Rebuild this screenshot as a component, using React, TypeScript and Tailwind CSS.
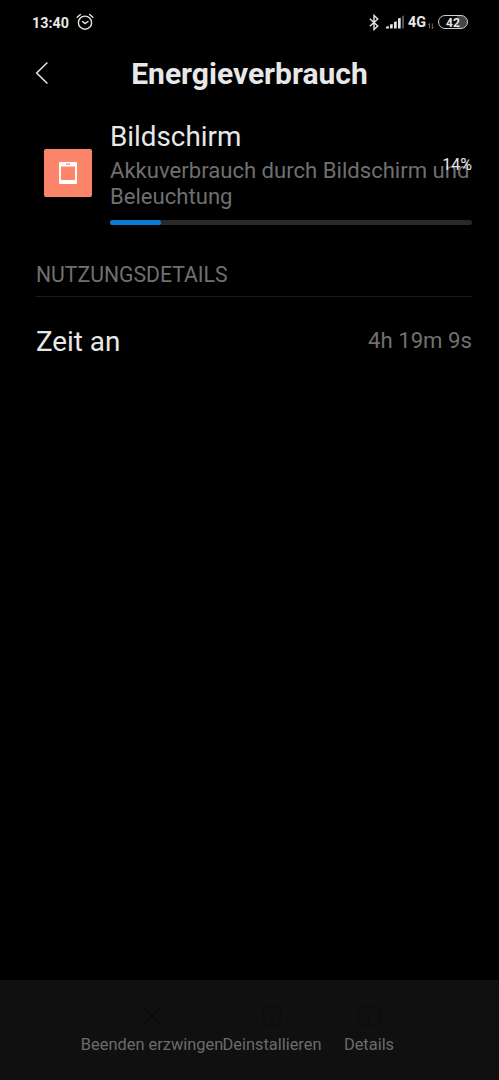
function StatusBar() {
  return (
    <div className="flex h-[44px] items-center justify-between pl-8 pr-[31px]">
      <div className="flex items-center gap-[7px]">
        <span className="pt-[2px] text-[14.3px] font-bold leading-none">13:40</span>
        <svg width="18" height="18" viewBox="0 0 18 18" fill="none" stroke="#e4e4e4" strokeWidth="1.4" strokeLinecap="round">
          <circle cx="9" cy="9.7" r="6.6" />
          <path d="M1.2 4.2 4.4 1.5M16.8 4.2l-3.2-2.7M6.5 8.5 9 10.6l3-2.1" />
        </svg>
      </div>
      <div className="flex items-center">
        <svg width="10" height="17" viewBox="0 0 10 17" fill="none" stroke="#e4e4e4" strokeWidth="1.4">
          <path d="M.8 4.7 8.8 12 5 15.6V1.4L8.8 5 .8 12.3" />
        </svg>
        <svg className="ml-[7px]" width="19" height="14" viewBox="0 0 19 14" fill="#e4e4e4">
          <path d="M0 11.8 2.9 10.9V13.5H0zM4 9.6l2.7-.7v4.6H4zM8 7l2.7-.7v7.2H8zM12 3.5l2.7-.7v10.7H12z" />
          <path d="M16 1l2-.6v13.1h-2z" fill="#555" />
        </svg>
        <span className="ml-[3px] pt-px text-[14.3px] font-bold leading-none">4G</span>
        <svg className="ml-[2px] mt-[8px]" width="6" height="6" viewBox="0 0 6 6" fill="none" stroke="#777" strokeWidth=".9">
          <path d="M1.5 5.5V.5L.3 2M4.3.5v5L5.6 4" />
        </svg>
        <div className="ml-1 flex h-[14px] w-[30px] items-center justify-center rounded-full border-[1.5px] border-[#d0d0d0] bg-[linear-gradient(90deg,#050505_0_65%,#444_65%)] pt-px text-[12px] font-bold leading-none">
          42
        </div>
      </div>
    </div>
  );
}

function ScreenIcon() {
  return (
    <div className="mt-[33px] flex size-12 shrink-0 items-center justify-center rounded-[2px] bg-[#fc8569]">
      <svg width="18" height="22" viewBox="0 0 18 22">
        <path fill="#fff" fillRule="evenodd" d="M1 0h16q1 0 1 1v20q0 1-1 1H1q-1 0-1-1V1q0-1 1-1zM2 4.5v13.5h14v-13.5zM7 1.6v1.2h4V1.6z" />
      </svg>
    </div>
  );
}

export default function App() {
  return (
    <main className="flex h-[1080px] w-[499px] flex-col bg-black font-[Roboto,sans-serif] text-[#e8e8e8]">
      <StatusBar />
      <header className="relative flex h-[60px] items-center justify-center">
        <svg className="absolute left-[35px] top-[17px]" width="14" height="24" viewBox="0 0 14 24" fill="none" stroke="#e0e0e0" strokeWidth="1.6">
          <path d="M12.4 1.5 1.7 12l10.7 10.5" />
        </svg>
        <h1 className="text-[30px] font-bold leading-none">Energieverbrauch</h1>
      </header>
      <section className="relative flex h-[136px] gap-[18px] pl-[44px] pr-[27px] pt-[12px]">
        <ScreenIcon />
        <div className="min-w-0 flex-1">
          <h2 className="mt-[4px] text-[27.8px] leading-[34px]">Bildschirm</h2>
          <p className="mt-[3px] whitespace-nowrap text-[22.1px] leading-[26px] text-[#6f6f6f]">
            Akkuverbrauch durch Bildschirm und
            <br />
            Beleuchtung
          </p>
          <div className="mt-[11px] h-[5px] rounded-full bg-[#292929]">
            <div className="h-full w-[14%] rounded-full bg-[#087bd4]" />
          </div>
        </div>
        <span className="absolute right-[27px] top-[52px] text-[16px] leading-[18px]">14%</span>
      </section>
      <section className="px-9">
        <h3 className="-mr-[9px] h-[57px] border-b border-[#1c1c1c] pt-[22px] text-[21.2px] leading-[26px] text-[#707070]">NUTZUNGSDETAILS</h3>
        <div className="-mr-[9px] flex h-[90px] items-center justify-between">
          <span className="text-[27.8px]">Zeit an</span>
          <span className="pb-[2px] text-[22.2px] text-[#707070]">4h 19m 9s</span>
        </div>
      </section>
      <footer className="mt-auto flex h-[100px] border-t border-[#131313] bg-[#101010] pl-[81px] pt-[23px] text-[16.4px] text-[#6b6b6b]">
        <div className="flex w-[142px] flex-col items-center">
          <svg width="24" height="24" viewBox="0 0 24 24" fill="none" stroke="#0c0c0c" strokeWidth="1.1">
            <path d="m3 3 18 18M21 3 3 21" />
          </svg>
          <span className="mt-[7px] whitespace-nowrap leading-5">Beenden erzwingen</span>
        </div>
        <div className="flex w-[98px] flex-col items-center">
          <svg width="24" height="24" viewBox="0 0 24 24" fill="none" stroke="#0c0c0c" strokeWidth="1.1">
            <path d="M1 4h22M8 4V1h8v3M4 4v17h16V4" />
          </svg>
          <span className="mt-[7px] leading-5">Deinstallieren</span>
        </div>
        <div className="ml-[23px] flex w-[50px] flex-col items-center">
          <svg width="24" height="24" viewBox="0 0 24 24" fill="none" stroke="#0c0c0c" strokeWidth="1.1">
            <circle cx="12" cy="12" r="11" />
            <path d="M12 6v2M10 10.5h2V18" />
          </svg>
          <span className="mt-[7px] leading-5">Details</span>
        </div>
      </footer>
    </main>
  );
}
